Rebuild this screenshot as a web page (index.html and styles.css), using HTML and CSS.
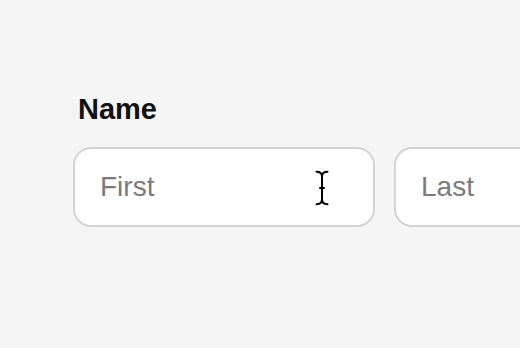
FILE: index.html
```html
<!DOCTYPE html>
<html lang="en">
<head>
<meta charset="utf-8">
<title>Name</title>
<link rel="stylesheet" href="styles.css">
</head>
<body>
<main class="page">
  <div class="field">
    <label class="label" for="first">Name</label>
    <div class="row">
      <div class="input-wrap">
        <input id="first" class="input" type="text" placeholder="First">
        <svg class="ibeam" width="14" height="36" viewBox="0 0 14 36" aria-hidden="true">
          <path d="M1.5 1.8 Q7 1.8 7 6.5 Q7 1.8 12.5 1.8" fill="none" stroke="#000" stroke-width="2" stroke-linecap="round"/>
          <path d="M7 6 V30" stroke="#000" stroke-width="2"/>
          <path d="M5 18 H9" stroke="#000" stroke-width="2" stroke-linecap="round"/>
          <path d="M1.5 34.2 Q7 34.2 7 29.5 Q7 34.2 12.5 34.2" fill="none" stroke="#000" stroke-width="2" stroke-linecap="round"/>
        </svg>
      </div>
      <div class="input-wrap">
        <input class="input" type="text" placeholder="Last" aria-label="Last">
      </div>
    </div>
  </div>
</main>
</body>
</html>
```

FILE: styles.css
```css
html, body {
  margin: 0;
  padding: 0;
}

body {
  background: #f5f5f5;
  width: 520px;
  height: 348px;
  overflow: hidden;
  font-family: "Liberation Sans", Arial, sans-serif;
}

.page {
  padding: 93px 0 0 73px;
}

.field {
  display: flex;
  flex-direction: column;
  gap: 22px;
}

.label {
  display: block;
  padding-left: 5px;
  font-size: 29px;
  line-height: 32px;
  font-weight: 700;
  color: #111;
}

.row {
  display: flex;
  gap: 19px;
}

.input-wrap {
  position: relative;
  flex: 0 0 302px;
}

.input {
  display: block;
  box-sizing: border-box;
  width: 302px;
  height: 80px;
  margin: 0;
  padding: 0 24px 0 25px;
  border: 2px solid #d4d4d4;
  border-radius: 18px;
  background: #fff;
  font-family: "Liberation Sans", Arial, sans-serif;
  font-size: 28px;
  color: #222;
  outline: none;
}

.input::placeholder {
  color: #7b7b7b;
  opacity: 1;
}

.ibeam {
  position: absolute;
  left: 242px;
  top: 23px;
}
```
